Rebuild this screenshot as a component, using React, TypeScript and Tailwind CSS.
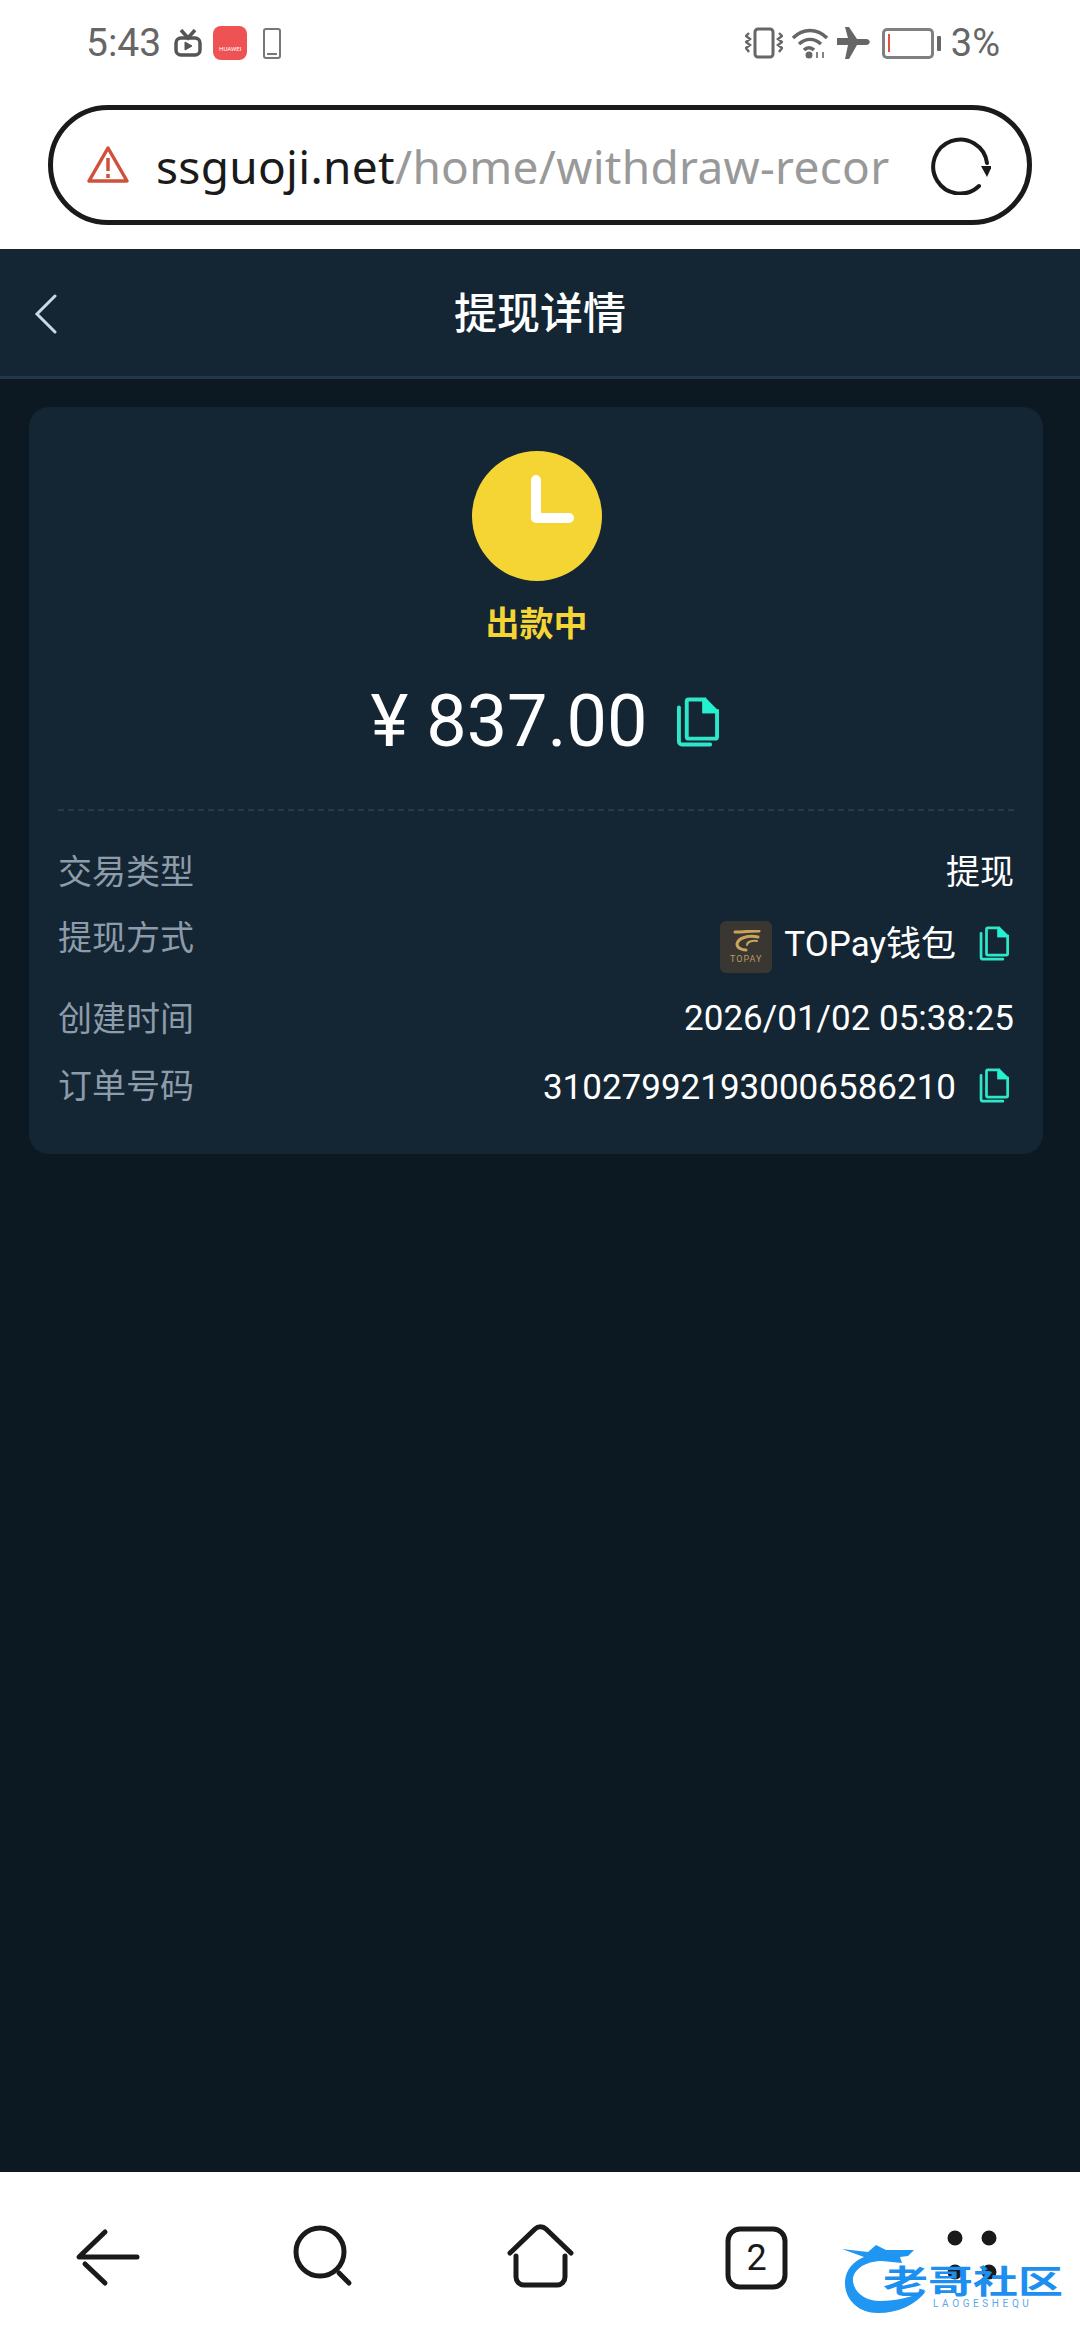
const font = { fontFamily: 'Roboto, "Noto Sans CJK SC", sans-serif' };

function CopyIcon({ className }: { className: string }) {
  return (
    <svg viewBox="0 0 44 50" className={className} fill="none">
      <path d="M3 10v35a3 3 0 0 0 3 3h29" stroke="#2ee6c8" strokeWidth="4" strokeLinecap="round" />
      <path d="M11 4a2 2 0 0 1 2-2h16v12h13v26a2 2 0 0 1-2 2H13a2 2 0 0 1-2-2z" stroke="#2ee6c8" strokeWidth="4" />
      <path d="M27 1h4l12 12v3H27z" fill="#25f0d0" />
    </svg>
  );
}

function Row({ label, children, className }: { label: string; children: React.ReactNode; className: string }) {
  return (
    <div className={`flex items-start justify-between ${className}`}>
      <span className="text-[34px] leading-[46px] text-[#8d9caa]">{label}</span>
      {children}
    </div>
  );
}

export default function App() {
  return (
    <div className="flex h-[2340px] w-[1080px] flex-col overflow-hidden bg-[#0c1923]" style={font}>
      <div className="flex h-[249px] flex-col bg-white">
        {/* status bar */}
        <div className="flex h-[105px] items-start justify-between pl-[86px] pr-[80px] pt-[20px] text-[#666]">
          <div className="flex items-center">
            <span className="text-[39px] leading-[46px]">5:43</span>
            <svg viewBox="0 0 28 28" className="ml-[13px] h-[28px] w-[28px]" fill="none" stroke="#555" strokeWidth="3.5">
              <rect x="2" y="9" width="24" height="17" rx="5" />
              <path d="M7 1l7 8 7-8" />
              <path d="M11 13l7 4-7 4z" fill="#555" strokeWidth="1" />
            </svg>
            <div className="ml-[11px] flex h-[34px] w-[34px] flex-col items-center justify-end rounded-[8px] bg-[#ee5253] pb-[7px] text-[6px] leading-[8px] text-white">
              HUAWEI
            </div>
            <div className="ml-[16px] flex h-[31px] w-[18px] flex-col justify-end rounded-[3px] border-2 border-[#777] p-[2px]">
              <div className="h-[2px] bg-[#777]" />
            </div>
          </div>
          <div className="flex items-center">
            <svg viewBox="0 0 38 32" className="h-[32px] w-[38px]" fill="none" stroke="#666" strokeWidth="3">
              <rect x="10" y="2" width="18" height="28" rx="3" />
              <path d="M4 6L1 9l4 3-4 3 4 3-4 3 3 4M34 6l3 3-4 3 4 3-4 3 4 3-3 4" strokeWidth="2.4" />
            </svg>
            <svg viewBox="0 0 38 32" className="ml-[8px] h-[32px] w-[38px]" fill="none" stroke="#666" strokeWidth="3.5">
              <path d="M2 11c10-10 24-10 34 0M8 17c7-6 15-6 22 0M13 23c3-3 7-3 10 0" />
              <circle cx="18" cy="28" r="3.5" fill="#666" stroke="none" />
              <path d="M26 31v-6M32 31v-6" strokeWidth="1.6" />
            </svg>
            <svg viewBox="0 0 34 32" className="ml-[8px] h-[32px] w-[34px]" fill="#666">
              <path d="M0 11h11L8 0h4l8 12h9c5 0 5 6 0 6h-9l-8 14H8l3-14H0z" />
            </svg>
            <div className="ml-[11px] flex h-[31px] w-[52px] items-center rounded-[5px] border-[3px] border-[#808080] pl-[3px]">
              <div className="h-[18px] w-[2px] bg-[#e0523f]" />
            </div>
            <div className="ml-[3px] h-[15px] w-[4px] rounded-[1px] bg-[#666]" />
            <span className="ml-[10px] text-[38px] leading-[46px]">3%</span>
          </div>
        </div>
        {/* address bar */}
        <div className="ml-[48px] flex h-[120px] w-[984px] items-center rounded-full border-[5px] border-[#1a1a1a] pl-[33px]">
          <svg viewBox="0 0 44 40" className="h-[40px] w-[44px]" fill="none" stroke="#d0503c" strokeWidth="3.5">
            <path d="M22 3L3 36h38z" strokeLinejoin="round" />
            <path d="M22 13v13M22 29v4" />
          </svg>
          <div
            className="ml-[26px] mt-[2px] w-[738px] overflow-hidden whitespace-nowrap text-[46px] leading-[60px] tracking-[0.3px] text-[#999]"
            style={{ fontFamily: '"Noto Sans", sans-serif' }}
          >
            <span className="text-[#1a1a1a]">ssguoji.net</span>/home/withdraw-recor
          </div>
          <svg viewBox="0 0 60 60" className="ml-[37px] h-[60px] w-[60px]" fill="none" stroke="#1a1a1a" strokeWidth="4" strokeLinecap="round">
            <path d="M48 51A27 27 0 1 1 56 28" />
            <path d="M50 31h11l-5 11z" fill="#1a1a1a" stroke="none" />
          </svg>
        </div>
      </div>

      <div className="relative flex h-[130px] items-center justify-center border-b-[3px] border-[#22384a] bg-[#142533] pt-[3px]">
        <svg viewBox="0 0 24 40" className="absolute left-[34px] top-[45px] h-[40px] w-[24px]" fill="none" stroke="#c8d9e8" strokeWidth="3" strokeLinecap="round">
          <path d="M21 2L3 20l18 18" />
        </svg>
        <span className="text-[43px] font-medium text-white">提现详情</span>
      </div>

      <div className="ml-[29px] mt-[28px] h-[747px] w-[1014px] rounded-[20px] bg-[#142533] px-[29px] pt-[44px]">
        <div className="flex flex-col items-center pl-[1px]">
          <svg viewBox="0 0 130 130" className="h-[130px] w-[130px]">
            <circle cx="65" cy="65" r="65" fill="#f5d533" />
            <path d="M64 29v38h33" fill="none" stroke="#fff" strokeWidth="10" strokeLinecap="round" strokeLinejoin="round" />
          </svg>
          <span className="mt-[20px] text-[34px] font-bold leading-[46px] text-[#f5d533]">出款中</span>
          <div className="mt-[27px] flex items-center pl-[16px]">
            <span className="text-[72px] leading-[96px] text-white">¥ 837.00</span>
            <CopyIcon className="ml-[28px] h-[50px] w-[43px]" />
          </div>
        </div>
        <div className="mt-[39px] border-t-2 border-dashed border-[#263a4a]" />
        <Row label="交易类型" className="mt-[38px]">
          <span className="text-[34px] leading-[46px] text-white">提现</span>
        </Row>
        <Row label="提现方式" className="mt-[20px]">
          <div className="flex items-center pt-[6px] text-white">
            <div className="flex h-[52px] w-[52px] flex-col items-center justify-center rounded-[6px] bg-[#3a3733]">
              <svg viewBox="0 0 30 22" className="h-[22px] w-[30px]" fill="none" stroke="#c9a45c" strokeWidth="3" strokeLinecap="round">
                <path d="M4 2c8 0 16-1 24-1" />
                <path d="M27 7C17 5 7 8 6 14c0 4 5 6 9 6" />
                <path d="M26 11c-5-1-10 1-10 4" strokeWidth="2" />
              </svg>
              <span className="mt-[2px] text-[9px] leading-[10px] tracking-[1px] text-[#b89a5e]">TOPAY</span>
            </div>
            <span className="ml-[12px] pb-[4px] text-[35px] leading-[46px]">TOPay钱包</span>
            <CopyIcon className="mb-[8px] ml-[23px] mr-[5px] h-[35px] w-[30px]" />
          </div>
        </Row>
        <Row label="创建时间" className="mt-[23px]">
          <span className="text-[35px] leading-[46px] text-white">2026/01/02 05:38:25</span>
        </Row>
        <Row label="订单号码" className="mt-[21px]">
          <div className="flex items-center pt-[2px] text-white">
            <span className="text-[35px] leading-[46px]">310279921930006586210</span>
            <CopyIcon className="mb-[6px] ml-[23px] mr-[5px] h-[35px] w-[30px]" />
          </div>
        </Row>
      </div>

      {/* bottom nav, with the site's watermark lying over it */}
      <div className="relative mt-auto h-[168px] bg-white">
        <svg viewBox="0 0 1080 168" className="h-full w-full" fill="none" stroke="#1a1a1a" strokeWidth="5" strokeLinecap="round" strokeLinejoin="round">
          <path d="M105 60L79 85h58M85 92l20 19" />
          <circle cx="320" cy="80" r="24" />
          <path d="M339 101l10 10" />
          <path d="M510 81l25-24a8 8 0 0 1 11 0l25 24M516 84v21a8 8 0 0 0 8 8h33a8 8 0 0 0 8-8V84" />
          <rect x="728" y="57" width="57" height="58" rx="12" />
          <circle cx="955" cy="66" r="5" fill="#1a1a1a" />
          <circle cx="989" cy="66" r="5" fill="#1a1a1a" />
          <circle cx="955" cy="100" r="5" fill="#1a1a1a" />
          <circle cx="989" cy="100" r="5" fill="#1a1a1a" />
        </svg>
        <span className="absolute left-[728px] top-[57px] flex h-[58px] w-[57px] items-center justify-center text-[36px] text-[#1a1a1a]">2</span>
        <div className="absolute left-[842px] top-[73px] h-[70px] w-[222px]">
          <svg viewBox="0 0 222 70" className="absolute left-0 top-0 h-[70px] w-[222px]" fill="#1f96f2">
            <path d="M0 4L26 7L34 0L44 5L72 5L66 11L58 12L60 18L40 16C22 16 10 26 11 36C12 48 24 56 38 56C54 56 70 52 84 46C74 60 56 68 36 68C14 68 2 52 3 36C4 24 12 16 22 12Z" />
          </svg>
          <span className="absolute left-[41px] top-[14px] origin-left scale-y-[0.72] whitespace-nowrap text-[45px] font-bold leading-[46px] text-[#1c8ff0]">老哥社区</span>
          <span className="absolute left-[91px] top-[54px] whitespace-nowrap text-[10px] leading-[10px] tracking-[3.6px] text-[#5aa8ea]">LAOGESHEQU</span>
        </div>
      </div>
    </div>
  );
}
